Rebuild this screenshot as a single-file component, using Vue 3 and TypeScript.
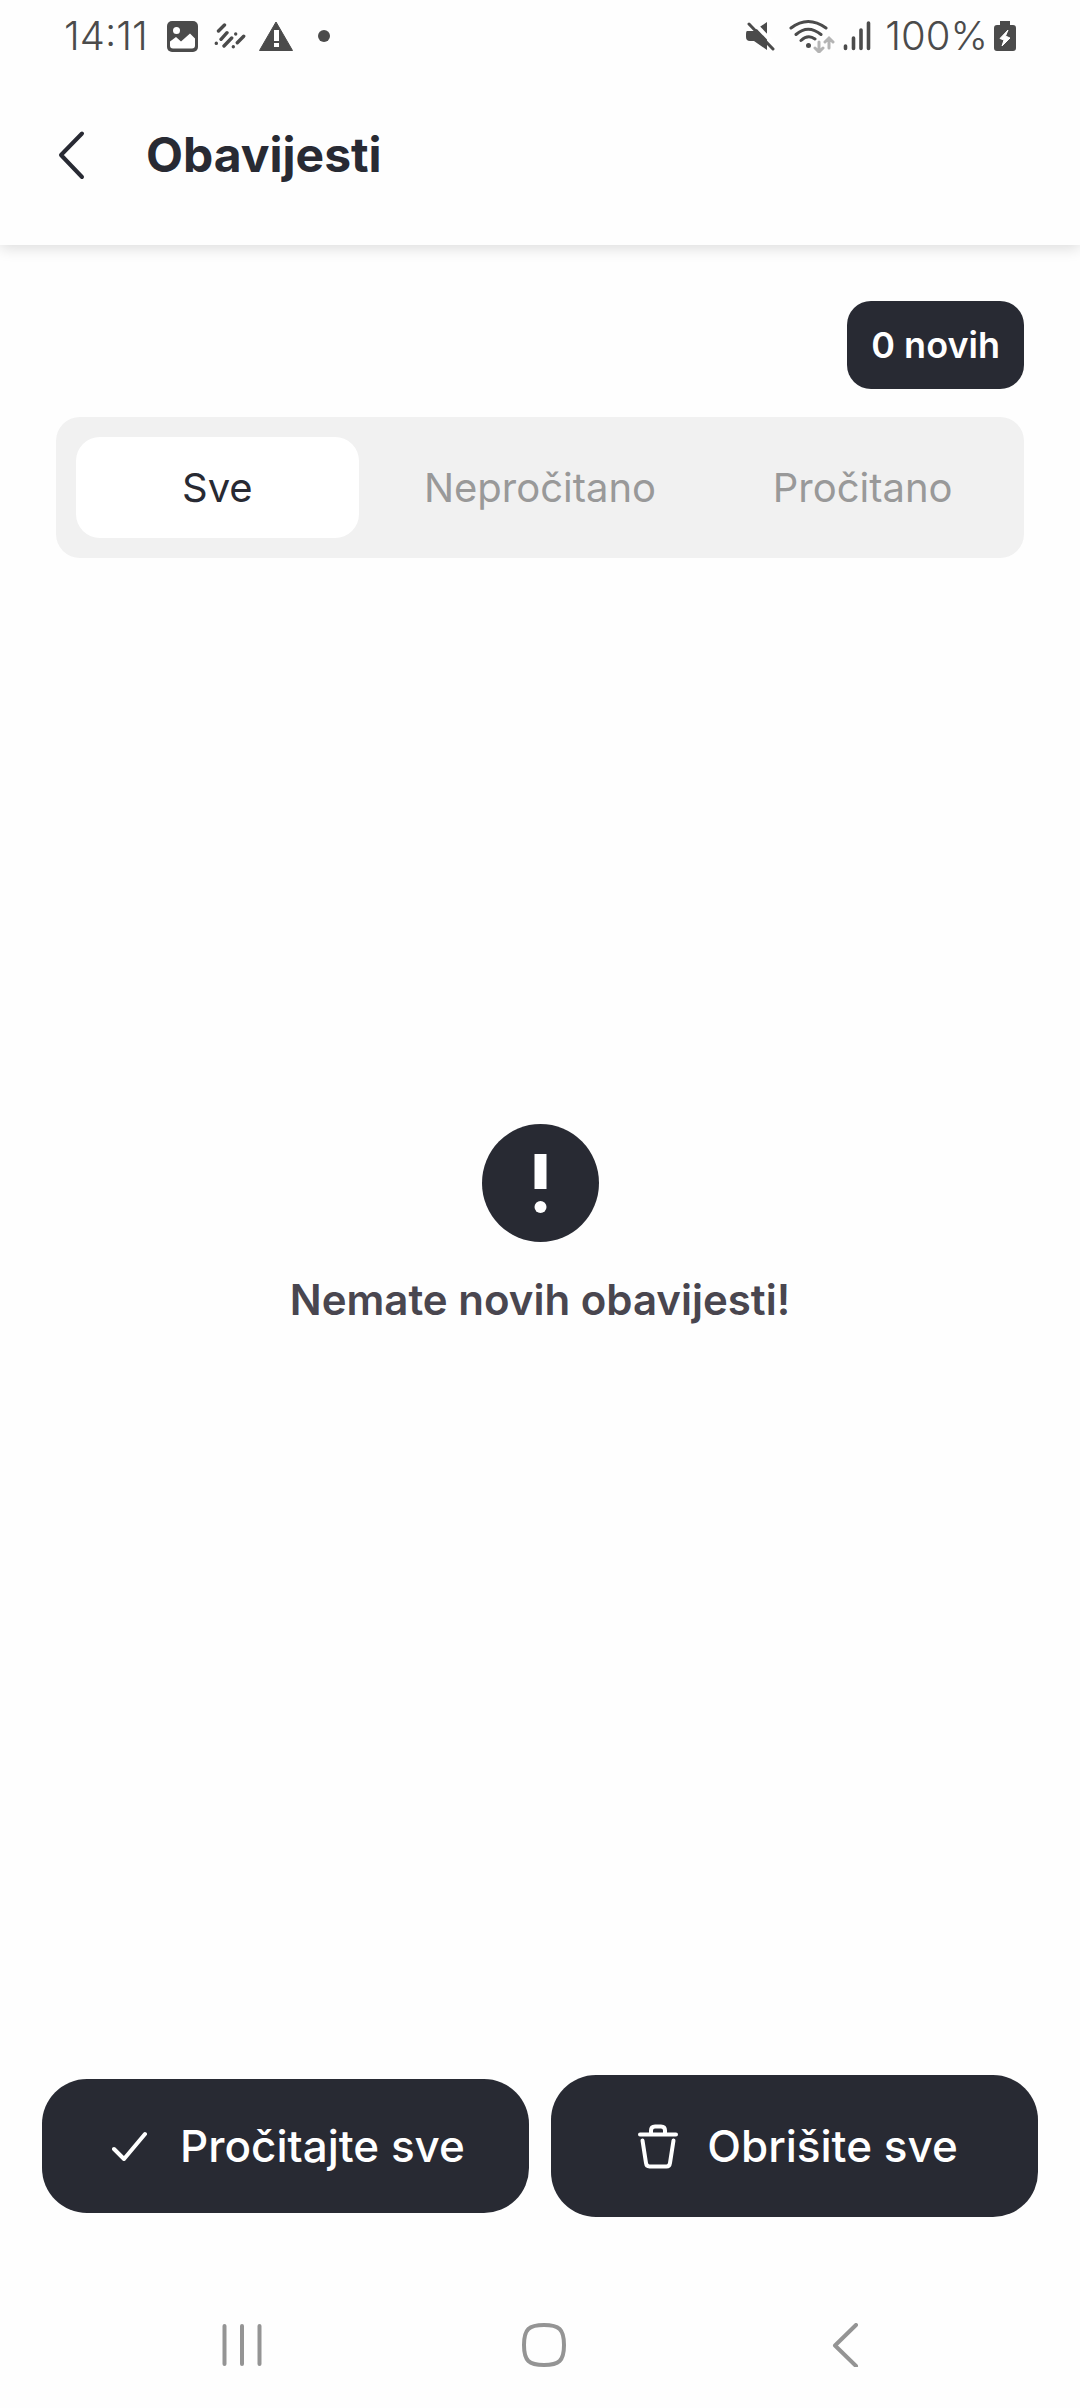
<script setup lang="ts">
import { ref } from 'vue'

type TabId = 'all' | 'unread' | 'read'

const tabs: { id: TabId; label: string }[] = [
  { id: 'all', label: 'Sve' },
  { id: 'unread', label: 'Nepročitano' },
  { id: 'read', label: 'Pročitano' },
]
const activeTab = ref<TabId>('all')
const newCount = ref(0)
</script>

<template>
  <div class="screen">
    <div class="top">
      <div class="status">
        <div class="status-group">
          <span class="status-text">14:11</span>
          <svg class="image-icon" width="32" height="32" viewBox="0 0 32 32">
            <rect x="1" y="1" width="31" height="31" rx="5" fill="#4b4b4b" />
            <circle cx="10.500" cy="10.500" r="3.500" fill="#fff" />
            <path d="M4 21.500l6-4.500 5 4.500 9-8 5 5v7q0 3-3 3H7q-3 0-3-3z" fill="#fff" />
          </svg>
          <svg class="dashes-icon" width="32" height="32" viewBox="0 0 32 32" fill="none" stroke="#4b4b4b" stroke-width="3.400" stroke-linecap="round">
            <path d="M4.500 11L10.500 5M2.300 23.300v.1M7 19.300L13 12.700M10 26L17.700 18M21.700 14v.1M19.300 26.700v.1M23.300 22.700L29.700 16.300" />
          </svg>
          <svg class="alert-icon" width="36" height="32" viewBox="0 0 36 32">
            <path d="M18 2L34.500 30.500H1.500z" fill="#4b4b4b" stroke="#4b4b4b" stroke-linejoin="round" />
            <path d="M16 10h5v11h-5zM16 23h5v4h-5z" fill="#fff" />
          </svg>
          <svg width="12" height="12" viewBox="0 0 12 12"><circle cx="6" cy="6" r="6" fill="#4b4b4b" /></svg>
        </div>
        <div class="status-group">
          <svg class="mute-icon" width="32" height="32" viewBox="0 0 32 32">
            <path d="M2 11h7l13-9v28L9 21H5q-4 0-4-4v-3q0-3 1-3z" fill="#4b4b4b" />
            <path d="M7 1L31 26" stroke="#fff" stroke-width="4" />
            <path d="M4 4L28 29" stroke="#4b4b4b" stroke-width="3" stroke-linecap="round" />
          </svg>
          <svg class="wifi-icon" width="46" height="34" viewBox="0 0 46 34" fill="none" stroke="#4b4b4b" stroke-width="3" stroke-linecap="round">
            <path d="M2 9Q19-4 37 9M7 15.500Q19 5 32 15.500M12 21.500Q19 15 26 20" />
            <circle cx="19.500" cy="26.500" r="2.500" fill="#4b4b4b" stroke="none" />
            <path d="M30 23v10M26 29l4 4 4-4M40 29V20M36 23l4-4 4 4" stroke="#b4b4b4" />
          </svg>
          <svg class="signal-icon" width="28" height="30" viewBox="0 0 28 30" stroke="#4b4b4b" stroke-width="3.600" stroke-linecap="round">
            <path d="M2.500 25v2.500M10.500 17v10.500M18 9v18.500M25.500 2v25.500" />
          </svg>
          <span class="status-text">100%</span>
          <svg class="battery-icon" width="22" height="32" viewBox="0 0 22 32">
            <path d="M6 1h10v4h3q3 0 3 3v20q0 3-3 3H3q-3 0-3-3V8q0-3 3-3h3z" fill="#4b4b4b" />
            <path d="M14 10L6 18.500l4 1.500-2 6 8-8-4.500-2z" fill="#fff" stroke="#fff" stroke-linejoin="round" />
          </svg>
        </div>
      </div>

      <header class="header">
        <button class="back" type="button" aria-label="Natrag">
          <svg width="28" height="50" viewBox="0 0 28 50" fill="none" stroke="#282a33" stroke-width="4" stroke-linecap="round" stroke-linejoin="round">
            <path d="M24 3.500L3 25L24 47" />
          </svg>
        </button>
        <h1 class="title">Obavijesti</h1>
      </header>
    </div>

    <main class="content">
      <span class="badge">{{ newCount }} novih</span>
      <div class="tabs" role="tablist">
        <button
          v-for="tab in tabs"
          :key="tab.id"
          class="tab"
          :class="{ active: tab.id === activeTab }"
          type="button"
          role="tab"
          :aria-selected="tab.id === activeTab"
          @click="activeTab = tab.id"
        >
          {{ tab.label }}
        </button>
      </div>
      <section class="empty">
        <svg width="117" height="118" viewBox="0 0 117 118">
          <ellipse cx="58.500" cy="59" rx="58.500" ry="59" fill="#282a33" />
          <path d="M52.500 30h12v35h-12z" fill="#fff" />
          <circle cx="58.500" cy="83" r="6" fill="#fff" />
        </svg>
        <p class="empty-text">Nemate novih obavijesti!</p>
      </section>
    </main>

    <footer class="actions">
      <button class="action read-all" type="button">
        <svg width="36" height="30" viewBox="0 0 36 30" fill="none" stroke="#fff" stroke-width="4" stroke-linecap="round" stroke-linejoin="round">
          <path d="M2 18L12 28L33 3" />
        </svg>
        <span>Pročitajte sve</span>
      </button>
      <button class="action delete-all" type="button">
        <svg width="42" height="46" viewBox="0 0 42 46" fill="none" stroke="#fff" stroke-width="4" stroke-linecap="round" stroke-linejoin="round">
          <path d="M3 11.500H39M14 11V7.500Q14 3.500 18 3.500H24Q28 3.500 28 7.500V11M5.500 17.500L9 40Q9.500 43.500 12.500 43.500H29.500Q32.500 43.500 33 40L36.500 17.500" />
        </svg>
        <span>Obrišite sve</span>
      </button>
    </footer>

    <nav class="system-nav">
      <button type="button" aria-label="Nedavne aplikacije">
        <svg width="44" height="44" viewBox="0 0 44 44" stroke="#949494" stroke-width="4" stroke-linecap="round"><path d="M4.500 3v38M22 3v38M39.500 3v38" /></svg>
      </button>
      <button type="button" aria-label="Početni zaslon">
        <svg width="44" height="44" viewBox="0 0 44 44" fill="none" stroke="#949494" stroke-width="4"><path d="M22 2C37 2 42 6 42 22S37 42 22 42 2 38 2 22 7 2 22 2z" /></svg>
      </button>
      <button type="button" aria-label="Natrag u sustavu">
        <svg width="44" height="44" viewBox="0 0 44 44" fill="none" stroke="#949494" stroke-width="4" stroke-linecap="round" stroke-linejoin="round"><path d="M33 2L12 22.500L33 43" /></svg>
      </button>
    </nav>
  </div>
</template>

<style>
body {
  margin: 0;
  background: #fefefe;
}
</style>

<style scoped>
.screen {
  display: flex;
  flex-direction: column;
  min-height: 100vh;
  font-family: Inter, "Liberation Sans", sans-serif;
  color: #282a33;
}
svg {
  display: block;
  flex: none;
}
button {
  margin: 0;
  padding: 0;
  border: 0;
  background: none;
  font: inherit;
  cursor: pointer;
}
.top {
  background: #fefefe;
  box-shadow: 0 3px 14px rgba(0, 0, 0, 0.14);
}
.status {
  display: flex;
  justify-content: space-between;
  padding: 0 64px;
}
.status-group {
  display: flex;
  align-items: center;
}
.status-text {
  font-size: 40px;
  font-weight: 300;
  line-height: 72px;
  color: #4b4b4b;
}
.image-icon {
  margin-left: 18px;
}
.dashes-icon {
  margin-left: 16px;
}
.alert-icon {
  margin: 0 24px 0 12px;
}
.wifi-icon {
  margin-left: 12px;
}
.signal-icon {
  margin: 0 14px 0 8px;
}
.battery-icon {
  margin-left: 6px;
}
.header {
  display: flex;
  align-items: center;
  gap: 60px;
  padding: 55px 58px 62px;
}
.title {
  margin: 0;
  font-size: 48px;
  font-weight: 700;
  line-height: 56px;
}
.content {
  display: flex;
  flex: 1;
  flex-direction: column;
  padding: 56px 56px 0;
}
.badge {
  align-self: flex-end;
  padding: 0 24px;
  border-radius: 24px;
  background: #282a33;
  color: #fff;
  font-size: 36px;
  font-weight: 600;
  line-height: 88px;
}
.tabs {
  display: grid;
  grid-template-columns: repeat(3, 1fr);
  gap: 40px;
  margin-top: 28px;
  padding: 20px;
  border-radius: 24px;
  background: #f1f1f1;
}
.tab {
  border-radius: 24px;
  color: #999;
  font-size: 40px;
  font-weight: 400;
  line-height: 101px;
}
.tab.active {
  background: #fff;
  color: #282a33;
}
.empty {
  display: flex;
  flex: 1;
  flex-direction: column;
  align-items: center;
  justify-content: center;
  gap: 34px;
  padding-bottom: 186px;
}
.empty-text {
  margin: 0;
  color: #49464f;
  font-size: 42px;
  font-weight: 600;
  line-height: 48px;
}
.actions {
  display: flex;
  align-items: center;
  gap: 22px;
  padding: 0 42px 65px;
}
.action {
  display: flex;
  flex: 1 1 0;
  align-items: center;
  justify-content: center;
  padding-left: 6px;
  border-radius: 45px;
  background: #282a33;
  color: #fff;
  font-size: 44px;
  font-weight: 500;
}
.read-all {
  gap: 32px;
  line-height: 134px;
}
.delete-all {
  gap: 28px;
  line-height: 142px;
}
.system-nav {
  display: flex;
  align-items: center;
  justify-content: space-between;
  height: 126px;
  padding: 0 213px 0 220px;
}
</style>
